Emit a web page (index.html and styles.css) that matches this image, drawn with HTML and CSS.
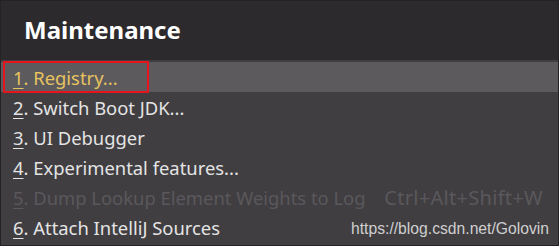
FILE: index.html
```html
<!DOCTYPE html>
<html lang="en">
<head>
    <meta charset="UTF-8">
    <title>Maintenance</title>
    <link rel="stylesheet" href="styles.css">
</head>
<body>

<div class="popup">
    <div class="popup-title">Maintenance</div>

    <!-- action list -->
    <ul class="menu">
        <li class="item selected">
            <span class="label"><u>1</u>. Registry...</span>
            <span class="mark"></span>
        </li>
        <li class="item"><span class="label"><u>2</u>. Switch Boot JDK...</span></li>
        <li class="item"><span class="label"><u>3</u>. UI Debugger</span></li>
        <li class="item"><span class="label"><u>4</u>. Experimental features...</span></li>
        <li class="item disabled">
            <span class="label"><u>5</u>. Dump Lookup Element Weights to Log</span>
            <span class="shortcut">Ctrl+Alt+Shift+W</span>
        </li>
        <li class="item">
            <span class="label"><u>6</u>. Attach IntelliJ Sources</span>
            <span class="watermark">https://blog.csdn.net/Golovin</span>
        </li>
    </ul>
</div>

</body>
</html>
```

FILE: styles.css
```css
/* popup frame */
body {
    margin: 0;
    background-color: #403e41;
    font-family: "Noto Sans", "Open Sans", sans-serif;
}

.popup {
    width: 557px;
    height: 244px;
    border: 1px solid #232224;
    background-color: #403e41;
    overflow: hidden;
}

.popup-title {
    height: 59px;
    padding-left: 23px;
    background-color: #2c2a2d;
    color: #ffffff;
    font-size: 24px;
    font-weight: bold;
    line-height: 58px;
}

.menu {
    list-style: none;
    margin: 0;
    padding: 2px 0 0 0;
}

.item {
    position: relative;
    display: flex;
    align-items: center;
    height: 30px;
    padding-left: 12px;
    padding-right: 15px;
    color: #e4e4e4;
    font-size: 18.4px;
}

.item u {
    text-underline-offset: 3px;
}

.selected {
    background-color: #5c5a5d;
    color: #e7c35f;
}

.disabled {
    color: #5a585c;
}

.shortcut {
    margin-left: auto;
    color: #5a585c;
    font-size: 20px;
    letter-spacing: 0.3px;
}

.watermark {
    margin-left: auto;
    margin-right: -6px;
    padding-top: 4px;
    color: #cfcfcf;
    font-family: "Liberation Sans", Arial, sans-serif;
    font-size: 15.7px;
}

/* red annotation frame */
.mark {
    position: absolute;
    left: 2px;
    top: -1px;
    width: 142px;
    height: 28px;
    border: 2px solid #e6141c;
}
```
